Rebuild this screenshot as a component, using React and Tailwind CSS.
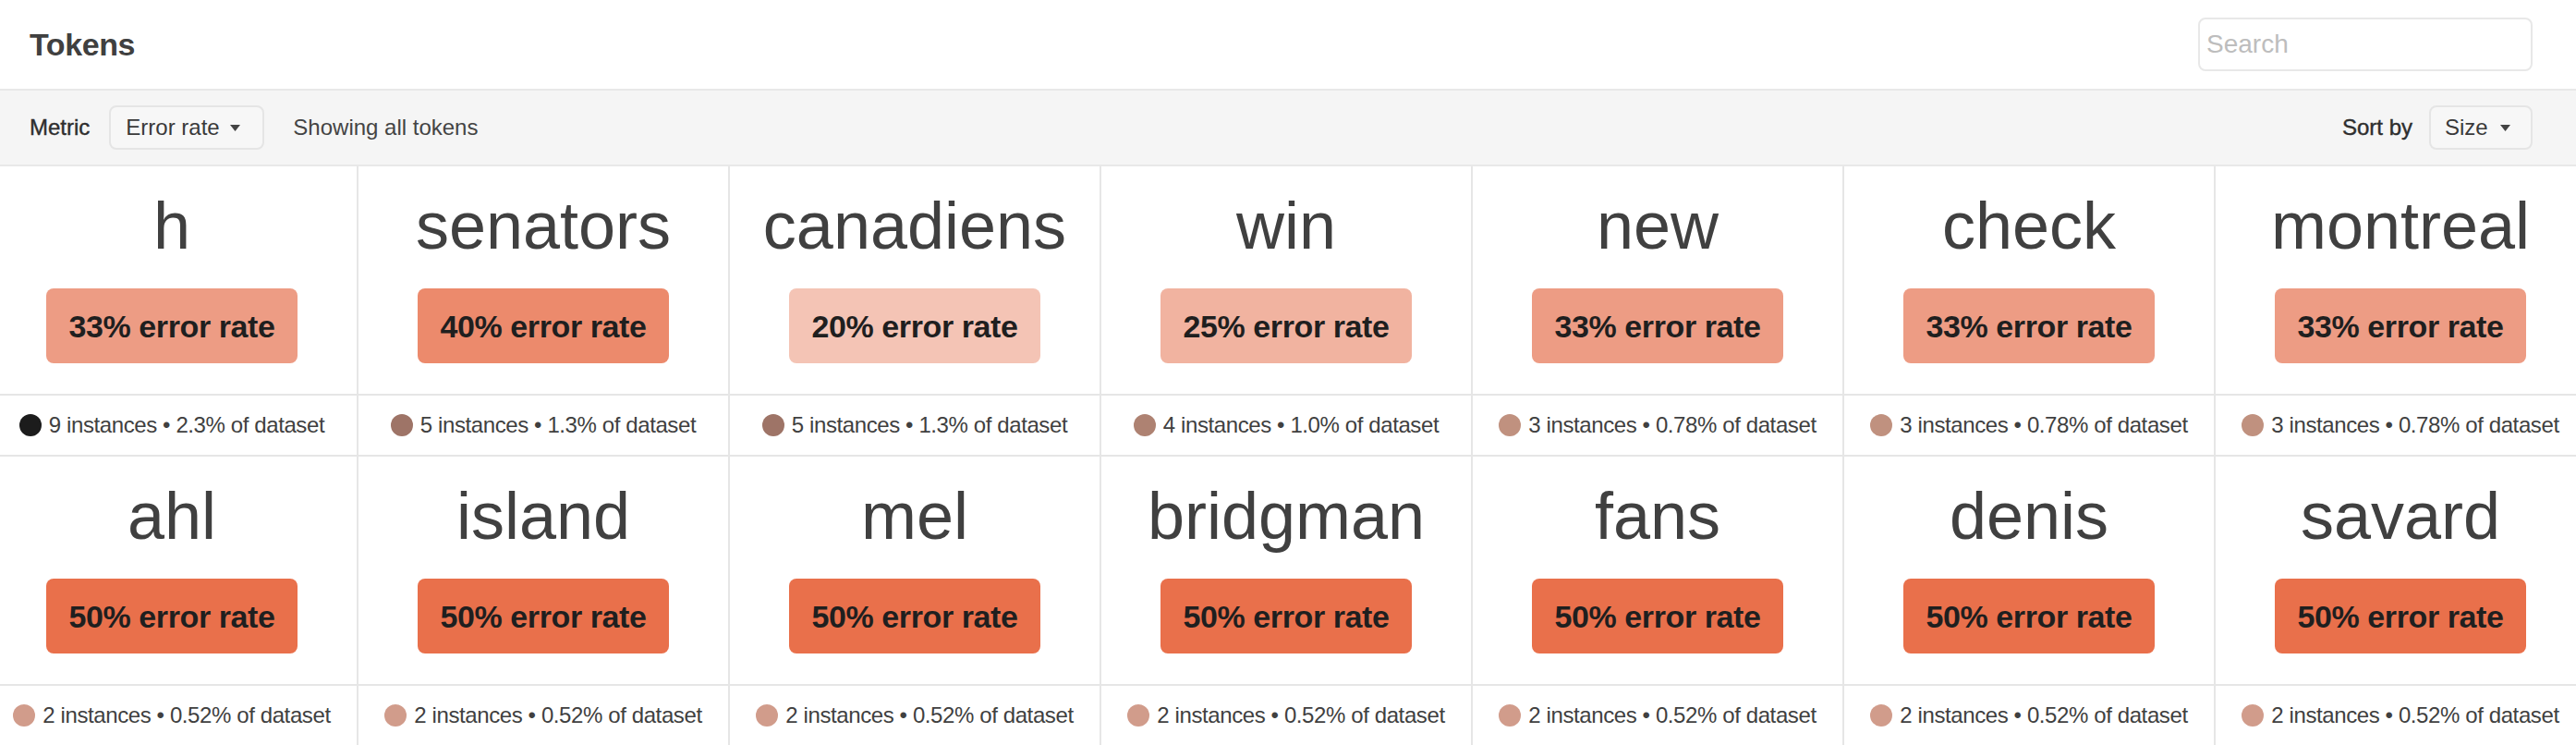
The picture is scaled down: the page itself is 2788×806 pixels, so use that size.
import React from "react";

const BADGE = {
  20: "bg-[#f4c4b5]",
  25: "bg-[#f1b3a0]",
  33: "bg-[#ed9c84]",
  40: "bg-[#ec8a6c]",
  50: "bg-[#e9704b]",
};

const DOT = {
  a: "bg-[#1c1c1c]",
  b: "bg-[#9e7467]",
  c: "bg-[#ae8272]",
  d: "bg-[#c0917f]",
  e: "bg-[#d19c8b]",
};

const tokens = [
  { w: "h", r: 33, n: 9, p: "2.3%", d: "a" },
  { w: "senators", r: 40, n: 5, p: "1.3%", d: "b" },
  { w: "canadiens", r: 20, n: 5, p: "1.3%", d: "b" },
  { w: "win", r: 25, n: 4, p: "1.0%", d: "c" },
  { w: "new", r: 33, n: 3, p: "0.78%", d: "d" },
  { w: "check", r: 33, n: 3, p: "0.78%", d: "d" },
  { w: "montreal", r: 33, n: 3, p: "0.78%", d: "d" },
  { w: "ahl", r: 50, n: 2, p: "0.52%", d: "e" },
  { w: "island", r: 50, n: 2, p: "0.52%", d: "e" },
  { w: "mel", r: 50, n: 2, p: "0.52%", d: "e" },
  { w: "bridgman", r: 50, n: 2, p: "0.52%", d: "e" },
  { w: "fans", r: 50, n: 2, p: "0.52%", d: "e" },
  { w: "denis", r: 50, n: 2, p: "0.52%", d: "e" },
  { w: "savard", r: 50, n: 2, p: "0.52%", d: "e" },
];

function Caret() {
  return (
    <svg width="11" height="7" viewBox="0 0 11 7" className="shrink-0">
      <polygon points="0,0 11,0 5.5,7" fill="#444444" />
    </svg>
  );
}

function Card({ t }) {
  return (
    <div className="flex flex-col border-r-2 border-[#e6e6e6]">
      <div className="h-[248px] border-b-2 border-[#e6e6e6] flex flex-col items-center pt-[28px]">
        <div className="text-[72px] leading-none text-[#404040] whitespace-nowrap">{t.w}</div>
        <div
          className={`mt-[32px] w-[272px] h-[81px] rounded-[8px] flex items-center justify-center text-[34px] leading-none font-bold tracking-[-0.4px] text-[#1f1f1f] ${BADGE[t.r]}`}
        >
          {t.r}% error rate
        </div>
      </div>
      <div className="h-[66px] border-b-2 border-[#e6e6e6] flex items-center justify-center gap-[8px]">
        <span className={`w-[24px] h-[24px] rounded-full shrink-0 ${DOT[t.d]}`} />
        <span className="text-[24px] tracking-[-0.4px] text-[#404040] whitespace-nowrap">
          {t.n} instances • {t.p} of dataset
        </span>
      </div>
    </div>
  );
}

export default function App() {
  return (
    <div className="w-[2788px] h-[806px] overflow-hidden bg-white font-['Liberation_Sans',Arial,sans-serif]">
      <header className="h-[98px] border-b-2 border-[#e8e8e8] flex items-center justify-between pl-[32px] pr-[47px]">
        <h1 className="text-[34px] font-bold tracking-[-0.4px] text-[#404040]">Tokens</h1>
        <input
          placeholder="Search"
          className="w-[362px] h-[58px] border-2 border-[#e8e8e8] rounded-[8px] px-[7px] text-[28px] text-[#333] placeholder:text-[#bdbdbd] outline-none"
        />
      </header>
      <div className="h-[82px] bg-[#f5f5f5] border-b-2 border-[#e8e8e8] flex items-center justify-between pl-[32px] pr-[47px]">
        <div className="flex items-center">
          <span className="text-[24px] text-[#2e2e2e] [-webkit-text-stroke:0.4px_#2e2e2e] mr-[21px]">Metric</span>
          <div className="w-[168px] h-[48px] border-2 border-[#e5e5e5] rounded-[8px] bg-[#f7f7f7] flex items-center pl-[16px] pr-[24px] justify-between">
            <span className="text-[24px] text-[#3a3a3a]">Error rate</span>
            <Caret />
          </div>
          <span className="ml-[31px] text-[24px] text-[#444444]">Showing all tokens</span>
        </div>
        <div className="flex items-center">
          <span className="text-[24px] text-[#2e2e2e] [-webkit-text-stroke:0.4px_#2e2e2e] mr-[18px]">Sort by</span>
          <div className="w-[112px] h-[48px] border-2 border-[#e5e5e5] rounded-[8px] bg-[#f7f7f7] flex items-center pl-[15px] pr-[22px] justify-between">
            <span className="text-[24px] text-[#3a3a3a]">Size</span>
            <Caret />
          </div>
        </div>
      </div>
      <div className="overflow-hidden">
        <div className="-ml-[14px] w-[2814px] grid grid-cols-[repeat(7,402px)]">
          {tokens.map((t) => (
            <Card key={t.w} t={t} />
          ))}
        </div>
      </div>
    </div>
  );
}
